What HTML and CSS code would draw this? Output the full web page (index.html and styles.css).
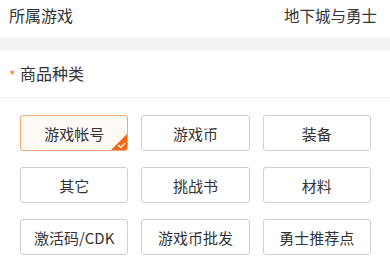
FILE: index.html
```html
<!DOCTYPE html>
<html lang="zh">
<head>
<meta charset="utf-8">
<link rel="stylesheet" href="styles.css">
</head>
<body>
<div class="row-game">
  <span class="label">所属游戏</span>
  <span class="value">地下城与勇士</span>
</div>
<div class="band"></div>
<div class="section-head"><span class="star">*</span><span class="title">商品种类</span></div>
<div class="grid">
  <div class="opt selected">游戏帐号<span class="corner"><svg viewBox="0 0 16 16" width="16" height="16"><path d="M16 0 L16 16 L0 16 Z" fill="#f26a10"/><path d="M7.5 11.5 L9.8 13.6 L13.8 9.4" fill="none" stroke="#fff" stroke-width="1.3" stroke-linecap="round" stroke-linejoin="round"/></svg></span></div>
  <div class="opt">游戏币</div>
  <div class="opt">装备</div>
  <div class="opt">其它</div>
  <div class="opt">挑战书</div>
  <div class="opt">材料</div>
  <div class="opt">激活码/CDK</div>
  <div class="opt">游戏币批发</div>
  <div class="opt">勇士推荐点</div>
</div>
</body>
</html>
```
FILE: styles.css
```css
html, body {
  margin: 0;
  padding: 0;
  background: #fff;
  font-family: "Noto Sans CJK SC", "Liberation Sans", sans-serif;
  color: #333;
}
body { width: 390px; height: 260px; overflow: hidden; }
.row-game {
  height: 38px;
  box-sizing: border-box;
  padding: 3px 13px 0 9px;
  display: flex;
  justify-content: space-between;
  align-items: flex-start;
  line-height: 24px;
}
.label { font-size: 16px; color: #333; }
.value { font-size: 15.5px; color: #333; }
.band { height: 12px; background: #f2f2f2; }
.section-head {
  height: 48px;
  box-sizing: border-box;
  border-bottom: 1px solid #ececec;
  display: flex;
  align-items: center;
  padding-left: 9px;
  padding-bottom: 1px;
}
.star { color: #f07c22; font-size: 14px; width: 11px; line-height: 16px; margin-top: 3px; }
.title { font-size: 16px; color: #333; }
.grid {
  display: grid;
  grid-template-columns: repeat(3, 1fr);
  column-gap: 13px;
  row-gap: 16px;
  padding: 17px 19px 0 20px;
}
.opt {
  position: relative;
  height: 36px;
  box-sizing: border-box;
  border: 1px solid #cfcfcf;
  border-radius: 3px;
  display: flex;
  align-items: center;
  justify-content: center;
  font-size: 15px;
  color: #333;
  white-space: nowrap;
  overflow: hidden;
}
.opt.selected {
  border-color: #eda676;
  background: #fffaf6;
}
.corner {
  position: absolute;
  right: 0;
  bottom: 0;
  width: 16px;
  height: 16px;
  display: block;
}
.corner svg { display: block; }
```
